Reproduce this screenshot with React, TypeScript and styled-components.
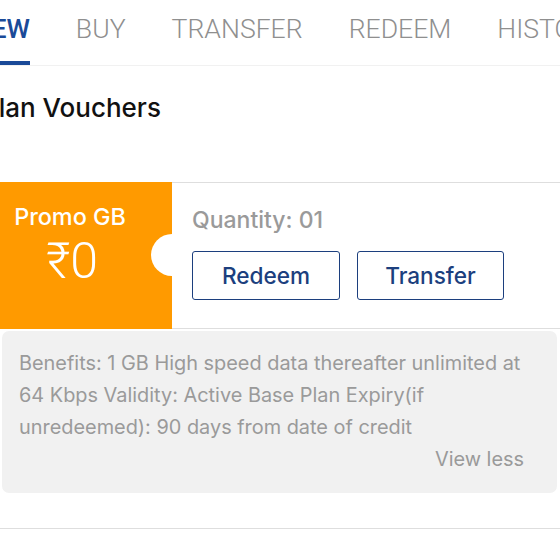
import React from "react"
import styled, { createGlobalStyle } from "styled-components"

const GlobalStyle = createGlobalStyle`
  html, body {
    margin: 0;
    padding: 0;
    background: #ffffff;
  }
  body {
    font-family: Inter, "Liberation Sans", Arial, sans-serif;
    overflow: hidden;
  }
`

const Page = styled.div`
  width: 560px;
  height: 560px;
  overflow: hidden;
  background: #ffffff;
`

const TabBar = styled.nav`
  display: flex;
  gap: 46px;
  margin-left: -100px;
  border-bottom: 1px solid #f1f1f1;
  white-space: nowrap;
`

const Tab = styled.div<{ $active?: boolean }>`
  font-family: Roboto, "Liberation Sans", sans-serif;
  font-size: 26.6px;
  font-weight: ${(p) => (p.$active ? 500 : 300)};
  color: ${(p) => (p.$active ? "#1a4a98" : "#8f8f8f")};
  padding: 14px 0 17px;
  line-height: 30px;
  border-bottom: 4px solid ${(p) => (p.$active ? "#1a4a98" : "transparent")};
`

const Heading = styled.h2`
  margin: 26px 0 0 -18px;
  font-size: 26px;
  font-weight: 500;
  color: #111111;
  line-height: 32px;
`

const Voucher = styled.section`
  display: flex;
  margin-top: 58px;
  height: 147px;
`

const Price = styled.div`
  position: relative;
  width: 172px;
  flex-shrink: 0;
  background: #ff9a00;
  color: #ffffff;
  display: flex;
  flex-direction: column;
  align-items: center;
  padding: 21px 44px 0 12px;
  box-sizing: border-box;

  &::after {
    content: "";
    position: absolute;
    right: -21px;
    top: 52px;
    width: 42px;
    height: 42px;
    border-radius: 50%;
    background: #ffffff;
  }
`

const PromoName = styled.div`
  font-size: 23.4px;
  font-weight: 500;
  line-height: 28px;
  white-space: nowrap;
`

const Amount = styled.div`
  font-family: Roboto, "DejaVu Sans", sans-serif;
  font-size: 50px;
  font-weight: 300;
  line-height: 56px;
  margin-top: 2px;
  padding-left: 4px;
`

const Details = styled.div`
  flex: 1;
  border-top: 1px solid #dedede;
  border-bottom: 1px solid #dedede;
  padding: 23px 0 0 20px;
  position: relative;
  z-index: 1;
`

const Quantity = styled.div`
  font-size: 23px;
  font-weight: 500;
  color: #9a9a9a;
  line-height: 28px;
`

const Actions = styled.div`
  display: flex;
  gap: 17px;
  margin-top: 17px;
`

const OutlineButton = styled.button<{ $width: number }>`
  width: ${(p) => p.$width}px;
  height: 49px;
  border: 1px solid #1c3f7e;
  border-radius: 3px;
  background: #ffffff;
  color: #1c3f7e;
  font-family: Inter, "Liberation Sans", sans-serif;
  font-size: 22.6px;
  font-weight: 500;
  cursor: pointer;
`

const Benefits = styled.div`
  margin: 2px 3px 0 2px;
  background: #f1f1f1;
  border-radius: 7px;
  padding: 16px 33px 18px 17px;
  color: #9a9a9a;
  font-size: 19.9px;
  line-height: 32px;
`

const ViewLess = styled.div`
  text-align: right;
`

const Divider = styled.hr`
  margin: 35px 0 0;
  border: none;
  border-top: 1px solid #dedede;
`

export default function App() {
  const tabs = ["OVERVIEW", "BUY", "TRANSFER", "REDEEM", "HISTORY"]
  return (
    <Page>
      <GlobalStyle />
      <TabBar>
        {tabs.map((t, i) => (
          <Tab key={t} $active={i === 0}>
            {t}
          </Tab>
        ))}
      </TabBar>
      <Heading>Plan Vouchers</Heading>
      <Voucher>
        <Price>
          <PromoName>Promo GB</PromoName>
          <Amount>₹0</Amount>
        </Price>
        <Details>
          <Quantity>Quantity: 01</Quantity>
          <Actions>
            <OutlineButton $width={148}>Redeem</OutlineButton>
            <OutlineButton $width={147}>Transfer</OutlineButton>
          </Actions>
        </Details>
      </Voucher>
      <Benefits>
        Benefits: 1 GB High speed data thereafter unlimited at 64 Kbps Validity: Active Base Plan
        Expiry(if unredeemed): 90 days from date of credit
        <ViewLess>View less</ViewLess>
      </Benefits>
      <Divider />
    </Page>
  )
}
